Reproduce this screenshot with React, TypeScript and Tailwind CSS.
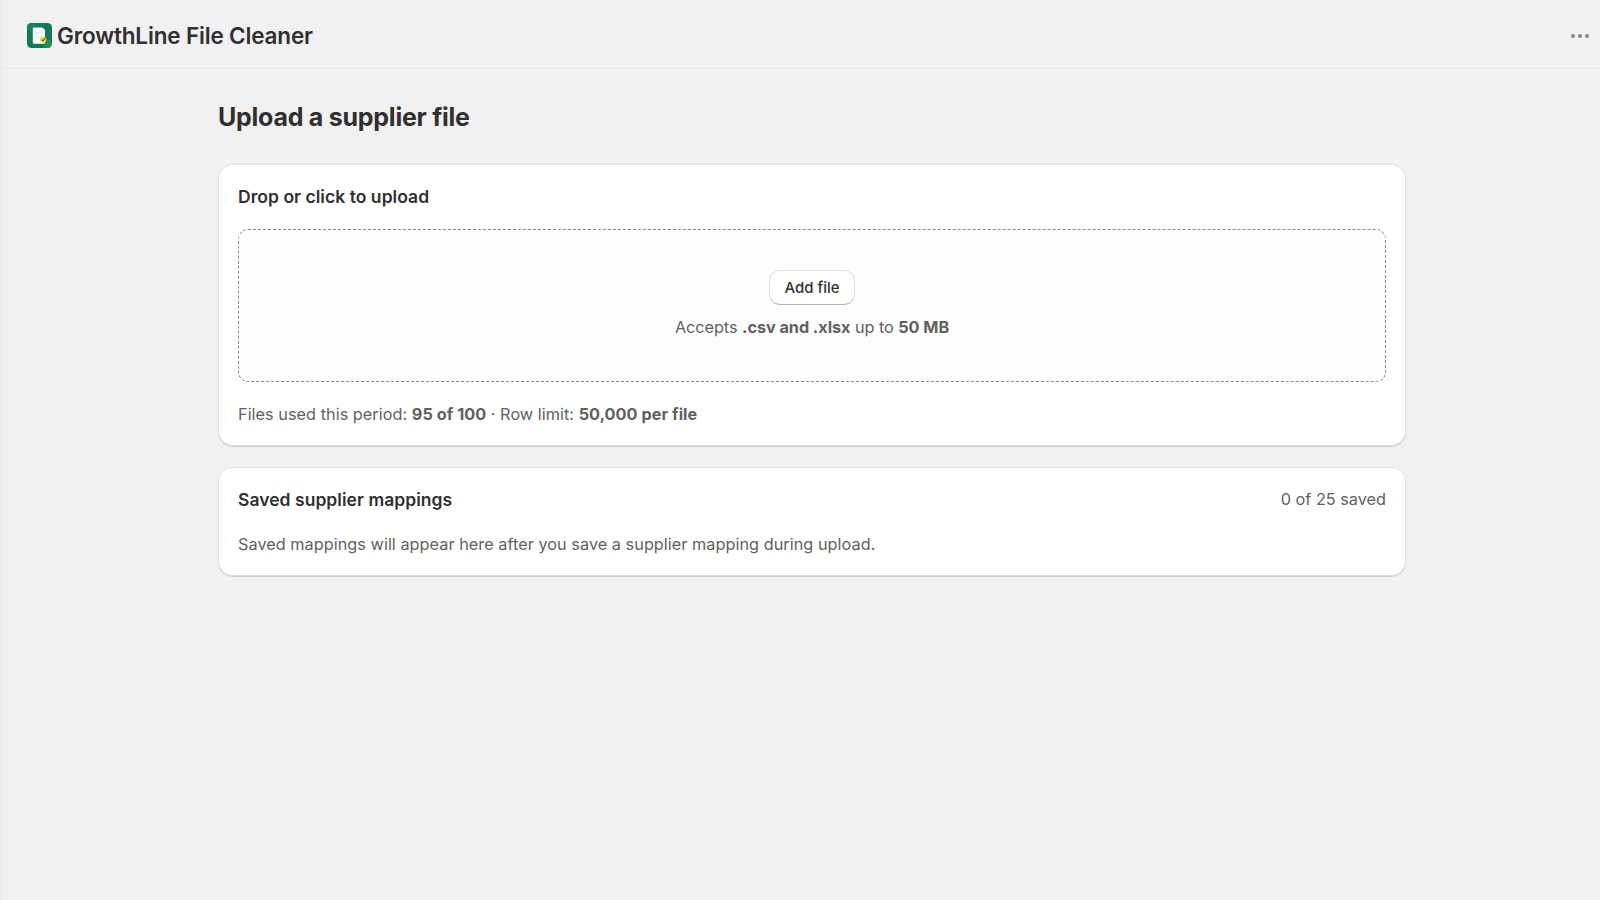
import { clsx } from "clsx";
import type { ReactNode } from "react";

const usage = { used: 95, limit: 100, rowLimit: 50000 };
const mappings = { saved: 0, limit: 25 };

function AppIcon() {
  return (
    <svg width="25" height="25" viewBox="0 0 25 25" fill="none" aria-hidden="true">
      <defs>
        <clipPath id="app-icon-clip">
          <rect width="25" height="25" rx="4.5" />
        </clipPath>
      </defs>
      <g clipPath="url(#app-icon-clip)">
        <rect width="25" height="25" fill="#127a59" />
        <circle cx="5" cy="4" r="5" fill="#16806e" />
        <circle cx="21" cy="21" r="4" fill="#2b8f55" />
        <path
          d="M7 4.500h8.500l2.500 2.500v12.500a1.200 1.200 0 0 1-1.200 1.200H7a1.200 1.200 0 0 1-1.200-1.200V5.700A1.200 1.200 0 0 1 7 4.500Z"
          fill="#fdfefd"
        />
        <path d="M8.300 9.500h7.500M8.300 12h7.500M8.300 14.500h5" stroke="#d9ebe6" strokeWidth="0.9" />
        <circle cx="16.200" cy="16.600" r="3.200" fill="#f1d75b" />
        <path d="m14.700 16.700 1.200 1.200 2.600-3" stroke="#3f7440" strokeWidth="1.2" />
      </g>
    </svg>
  );
}

function MoreIcon() {
  return (
    <svg width="20" height="6" viewBox="0 0 20 6" fill="#858585" aria-hidden="true">
      <circle cx="3" cy="3" r="2" />
      <circle cx="10" cy="3" r="2" />
      <circle cx="17" cy="3" r="2" />
    </svg>
  );
}

function Card({ children, className }: { children: ReactNode; className?: string }) {
  return (
    <section
      className={clsx(
        "flex flex-col gap-5 rounded-[15px] border border-[#e0e0e0] border-b-[#dedede] bg-white px-[19px] pt-[19px] pb-[18px] shadow-[0_1px_0_0_#cfcfcf]",
        className,
      )}
    >
      {children}
    </section>
  );
}

function CardTitle({ children }: { children: ReactNode }) {
  return (
    <h2 className="text-[17.5px] leading-[25px] font-semibold tracking-[0.04px] text-[#303030]">
      {children}
    </h2>
  );
}

function DropZone() {
  return (
    <div className="flex h-[153px] flex-col items-center justify-center gap-[11px] rounded-[10px] border border-dashed border-[#8a8a8a] bg-[#fdfdfd]">
      <button className="h-[33px] rounded-[10px] bg-white px-[14px] text-[15px] leading-5 font-medium text-[#303030] shadow-[0_1px_0_0_#b5b5b5,0_0_0_1px_#e3e3e3]">
        Add file
      </button>
      <p className="tracking-[-0.05px]">
        Accepts <b className="font-bold">.csv and .xlsx</b> up to <b className="font-bold">50 MB</b>
      </p>
    </div>
  );
}

export default function App() {
  return (
    <div className="min-h-screen border-l-2 border-[#ebebeb] bg-[#f1f1f1] font-['Inter',sans-serif] text-[16.25px] leading-[25px] text-[#616161]">
      <header className="flex h-[69px] items-center justify-between border-b border-[#e7e7e7] pr-[10px] pl-[25px]">
        <div className="flex items-center gap-[5px] pt-[3px]">
          <AppIcon />
          <span className="text-[22.5px] leading-[30px] font-semibold tracking-[-0.16px] text-[#303030]">
            GrowthLine File Cleaner
          </span>
        </div>
        <button aria-label="More actions" className="pt-[3px]">
          <MoreIcon />
        </button>
      </header>

      <main className="ml-[216px] w-[1188px] pt-[33px]">
        <h1 className="text-[25px] leading-[30px] font-bold tracking-[-0.25px] text-[#303030]">
          Upload a supplier file
        </h1>

        <Card className="mt-8">
          <CardTitle>Drop or click to upload</CardTitle>
          <DropZone />
          <p className="tracking-[0.037px]">
            Files used this period:{" "}
            <b className="font-bold">
              {usage.used} of {usage.limit}
            </b>{" "}
            · Row limit: <b className="font-bold">{usage.rowLimit.toLocaleString("en-US")} per file</b>
          </p>
        </Card>

        <Card className="mt-[21px]">
          <div className="flex items-center justify-between">
            <CardTitle>Saved supplier mappings</CardTitle>
            <span>
              {mappings.saved} of {mappings.limit} saved
            </span>
          </div>
          <p className="tracking-[0.037px]">
            Saved mappings will appear here after you save a supplier mapping during upload.
          </p>
        </Card>
      </main>
    </div>
  );
}
